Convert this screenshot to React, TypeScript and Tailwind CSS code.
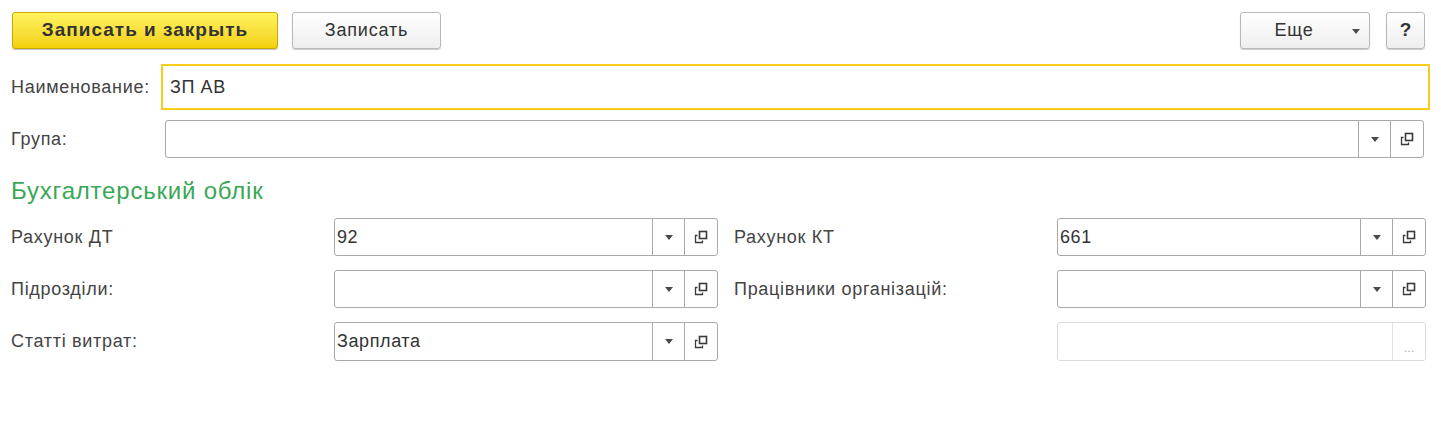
import React from "react";

const CopyIcon = () => (
  <svg width="14" height="14" viewBox="0 0 14 14" fill="none">
    <rect x="5.5" y="1.5" width="7" height="7" stroke="#3a3a3a" strokeWidth="1.6" />
    <path d="M3.5 5.5 H1.5 V12.5 H8.5 V10.5" stroke="#3a3a3a" strokeWidth="1.3" />
  </svg>
);

const Arrow = () => (
  <svg width="8" height="5" viewBox="0 0 8 5">
    <path d="M0 0 H8 L4 5 Z" fill="#4a4a4a" />
  </svg>
);

const SelectField = ({ value, width }: { value?: string; width: string }) => (
  <div className={`flex h-full ${width} rounded-[3px] border border-[#a9a9a9] bg-white`}>
    <div className="flex flex-1 items-center pl-[2px] text-[18px] tracking-[0.6px] text-[#333]">{value}</div>
    <div className="flex w-[32px] items-center justify-center border-l border-[#a9a9a9]">
      <Arrow />
    </div>
    <div className="flex w-[33px] items-center justify-center border-l border-[#a9a9a9]">
      <CopyIcon />
    </div>
  </div>
);

const Label = ({ text, width }: { text?: string; width: string }) => (
  <div className={`flex items-center ${width} text-[18px] tracking-[0.7px] text-[#444]`}>{text}</div>
);

export default function App() {
  return (
    <div
      className="h-[425px] w-[1441px] bg-white"
      style={{ fontFamily: '"Liberation Sans", Arial, sans-serif' }}
    >
      {/* toolbar */}
      <div className="mt-[12px] flex h-[37px] pl-[12px] pr-[16px]">
        <button className="h-[37px] w-[266px] rounded-[3px] border border-[#c8a900] bg-gradient-to-b from-[#fff35c] to-[#f3d000] text-[19px] font-bold tracking-[1px] text-[#333] shadow-[0_1px_1px_rgba(0,0,0,0.25)]">
          Записать и закрыть
        </button>
        <button className="ml-[14px] h-[37px] w-[149px] rounded-[3px] border border-[#b8b8b8] bg-gradient-to-b from-white to-[#eeeeee] text-[18px] tracking-[0.8px] text-[#333] shadow-[0_1px_1px_rgba(0,0,0,0.2)]">
          Записать
        </button>
        <div className="flex-1" />
        <button className="relative flex h-[37px] w-[130px] items-center justify-center rounded-[3px] border border-[#b8b8b8] bg-gradient-to-b from-white to-[#eeeeee] text-[18px] tracking-[0.8px] text-[#333] shadow-[0_1px_1px_rgba(0,0,0,0.2)]">
          <span className="mr-[22px]">Еще</span>
          <span className="absolute right-[9px] top-[16px]">
            <Arrow />
          </span>
        </button>
        <button className="ml-[16px] h-[37px] w-[39px] rounded-[3px] border border-[#b8b8b8] bg-gradient-to-b from-white to-[#eeeeee] text-[19px] font-bold text-[#333] shadow-[0_1px_1px_rgba(0,0,0,0.2)]">
          ?
        </button>
      </div>

      {/* name */}
      <div className="mt-[15px] flex h-[46px] pl-[11px] pr-[11px]">
        <Label text="Наименование:" width="w-[150px]" />
        <div className="flex flex-1 items-center border-2 border-[#f8cc1b] pl-[7px] text-[18px] tracking-[0.6px] text-[#333]">
          ЗП АВ
        </div>
      </div>

      {/* group */}
      <div className="mt-[10px] flex h-[38px] pl-[11px] pr-[17px]">
        <Label text="Група:" width="w-[154px]" />
        <SelectField width="flex-1" />
      </div>

      <div className="mt-[20px] h-[26px] pl-[11px] text-[24px] leading-[26px] tracking-[0.8px] text-[#3aa757]">
        Бухгалтерський облік
      </div>

      {/* accounting rows */}
      <div className="mt-[14px] flex flex-col gap-[14px] pl-[11px]">
        <div className="flex h-[38px]">
          <Label text="Рахунок ДТ" width="w-[323px]" />
          <SelectField value="92" width="w-[384px]" />
          <Label text="Рахунок КТ" width="w-[323px] ml-[16px]" />
          <SelectField value="661" width="w-[369px]" />
        </div>
        <div className="flex h-[38px]">
          <Label text="Підрозділи:" width="w-[323px]" />
          <SelectField width="w-[384px]" />
          <Label text="Працівники організацій:" width="w-[323px] ml-[16px]" />
          <SelectField width="w-[369px]" />
        </div>
        <div className="flex h-[39px]">
          <Label text="Статті витрат:" width="w-[323px]" />
          <SelectField value="Зарплата" width="w-[384px]" />
          <Label width="w-[323px] ml-[16px]" />
          <div className="flex h-full w-[369px] rounded-[3px] border border-[#dcdcdc] bg-white">
            <div className="flex-1" />
            <div className="flex w-[33px] items-end justify-center border-l border-[#e2e2e2] pb-[6px] text-[12px] leading-none text-[#b0b0b0]">
              ...
            </div>
          </div>
        </div>
      </div>
    </div>
  );
}
